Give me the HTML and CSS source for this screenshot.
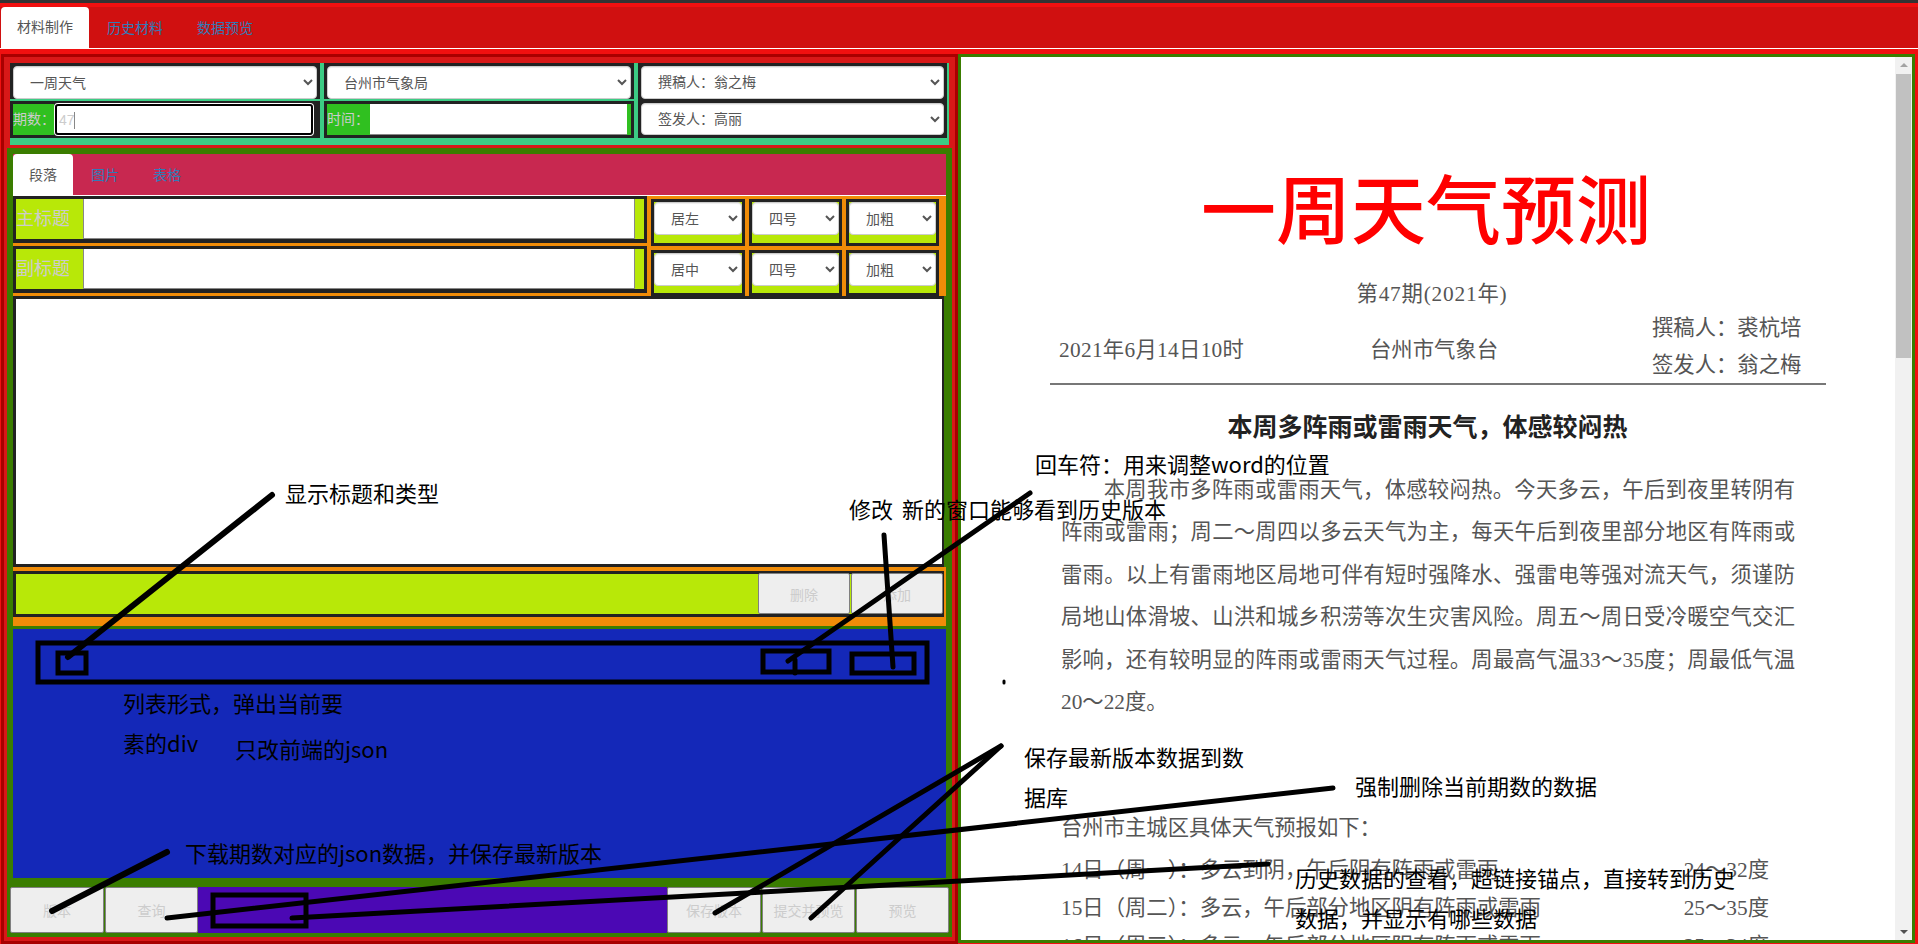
FILE: index.html
```html
<!DOCTYPE html>
<html lang="zh-CN">
<head>
  <meta charset="UTF-8" />
  <title>材料制作</title>
  <link rel="stylesheet" href="styles.css">
</head>
<body>
  <div class="top-strip"></div>

  <ul class="nav-tabs">
    <li class="active">材料制作</li>
    <li>历史材料</li>
    <li>数据预览</li>
  </ul>

  <div class="main">
    <!-- left: the form -->
    <div class="left">
      <div class="head">
        <div class="head-col">
          <div class="select-box">
            <select class="form-select"><option>一周天气</option></select>
          </div>
          <div class="input-group no-tail">
            <span class="input-label">期数：</span>
            <span class="input-wrap">
              <input class="form-input focused" type="text" value="47" />
              <span class="caret"></span>
            </span>
          </div>
        </div>
        <div class="head-col">
          <div class="select-box">
            <select class="form-select"><option>台州市气象局</option></select>
          </div>
          <div class="input-group">
            <span class="input-label">时间：</span>
            <input class="form-input" type="text" />
          </div>
        </div>
        <div class="head-col people">
          <select class="form-select"><option>撰稿人：翁之梅</option></select>
          <select class="form-select"><option>签发人：高丽</option></select>
        </div>
      </div>

      <div class="panel">
        <ul class="sub-tabs">
          <li class="active">段落</li>
          <li>图片</li>
          <li>表格</li>
        </ul>

        <div class="title-rows">
          <div class="title-inputs">
            <div class="title-group">
              <span class="title-label">主标题</span>
              <input class="title-input" type="text" />
            </div>
            <div class="title-group">
              <span class="title-label">副标题</span>
              <input class="title-input" type="text" />
            </div>
          </div>
          <div class="title-opts">
            <div class="opt"><select class="form-select"><option>居左</option></select></div>
            <div class="opt"><select class="form-select"><option>四号</option></select></div>
            <div class="opt"><select class="form-select"><option>加粗</option></select></div>
            <div class="opt"><select class="form-select"><option>居中</option></select></div>
            <div class="opt"><select class="form-select"><option>四号</option></select></div>
            <div class="opt"><select class="form-select"><option>加粗</option></select></div>
          </div>
        </div>

        <div class="text-box"><textarea class="text-area"></textarea></div>

        <div class="action-wrap">
          <div class="action-bar">
            <button class="btn small">删除</button>
            <button class="btn small">添加</button>
          </div>
        </div>

        <div class="list-area"></div>

        <div class="footer">
          <button class="btn wide">版本</button>
          <button class="btn">查询</button>
          <div class="footer-fill"></div>
          <button class="btn wide">保存版本</button>
          <button class="btn">提交并预览</button>
          <button class="btn">预览</button>
        </div>
      </div>
    </div>

    <!-- right: the document preview -->
    <div class="right">
      <div class="doc">
        <h1 class="doc-title">一周天气预测</h1>
        <p class="doc-issue">第47期(2021年)</p>
        <div class="doc-meta">
          <span class="doc-date">2021年6月14日10时</span>
          <span>台州市气象台</span>
          <span class="doc-people">撰稿人：裘杭培<br>签发人：翁之梅</span>
        </div>
        <h2 class="doc-head">本周多阵雨或雷雨天气，体感较闷热</h2>
        <p class="doc-para">本周我市多阵雨或雷雨天气，体感较闷热。今天多云，午后到夜里转阴有阵雨或雷雨；周二～周四以多云天气为主，每天午后到夜里部分地区有阵雨或雷雨。以上有雷雨地区局地可伴有短时强降水、强雷电等强对流天气，须谨防局地山体滑坡、山洪和城乡积涝等次生灾害风险。周五～周日受冷暖空气交汇影响，还有较明显的阵雨或雷雨天气过程。周最高气温33～35度；周最低气温20～22度。</p>
        <div class="doc-list">
          <div class="doc-row">台州市主城区具体天气预报如下：</div>
          <div class="doc-row"><span>14日（周一）：多云到阴，午后阴有阵雨或雷雨</span><span>24～32度</span></div>
          <div class="doc-row"><span>15日（周二）：多云，午后部分地区阴有阵雨或雷雨</span><span>25～35度</span></div>
          <div class="doc-row"><span>16日（周三）：多云，午后部分地区阴有阵雨或雷雨</span><span>25～34度</span></div>
        </div>
      </div>
      <div class="scrollbar">
        <span class="arrow up"></span>
        <span class="thumb"></span>
        <span class="arrow down"></span>
      </div>
    </div>
  </div>

  <!-- hand drawn notes on top of the screenshot -->
  <svg class="marks" width="1918" height="944" viewBox="0 0 1918 944">
    <rect x="38" y="643" width="889" height="39" />
    <rect x="58" y="653" width="28" height="20" />
    <rect x="763" y="651" width="66" height="21" />
    <rect x="852" y="654" width="62" height="19" />
    <rect x="213" y="895" width="93" height="31" />
    <line class="thick" x1="68" y1="657" x2="272" y2="495" />
    <line x1="788" y1="661" x2="1030" y2="493" />
    <line x1="795" y1="660" x2="795" y2="673" />
    <line x1="884" y1="535" x2="893" y2="667" />
    <line class="thick" x1="52" y1="911" x2="167" y2="852" />
    <line x1="167" y1="918" x2="1333" y2="788" />
    <line x1="292" y1="918" x2="1268" y2="864" />
    <line x1="715" y1="913" x2="1001" y2="746" />
    <line x1="811" y1="918" x2="1001" y2="746" />
    <line class="dot" x1="1004" y1="681" x2="1004" y2="683" />
  </svg>
  <div class="note n-title">显示标题和类型</div>
  <div class="note n-enter">回车符：用来调整word的位置</div>
  <div class="note n-edit">修改 新的窗口能够看到历史版本</div>
  <div class="note n-list">列表形式，弹出当前要<br>素的div</div>
  <div class="note n-json">只改前端的json</div>
  <div class="note n-down">下载期数对应的json数据，并保存最新版本</div>
  <div class="note n-save">保存最新版本数据到数<br>据库</div>
  <div class="note n-del">强制删除当前期数的数据</div>
  <div class="note n-hist">历史数据的查看，超链接锚点，直接转到历史<br>数据，并显示有哪些数据</div>
</body>
</html>
```

FILE: styles.css
```css
* {
    box-sizing: border-box;
}

body {
    margin: 0;
    width: 1918px;
    height: 944px;
    overflow: hidden;
    position: relative;
    background-color: #f01010;
    font-family: "Liberation Sans", "Noto Sans CJK SC", sans-serif;
    font-size: 14px;
    color: #555;
}

.top-strip {
    height: 3px;
    background-color: #333;
}

/* tabs */
.nav-tabs {
    display: flex;
    list-style: none;
    margin: 4px 0 0;
    padding: 0 0 0 1px;
    height: 42px;
    background-color: #d01010;
    border-bottom: 1px solid #fff;
}

.nav-tabs li {
    padding: 0 16px;
    margin-right: 2px;
    line-height: 42px;
    color: #337ab7;
}

.nav-tabs li.active {
    height: 41px;
    line-height: 41px;
    color: #555;
    background-color: #fff;
    border-radius: 4px 4px 0 0;
}

.main {
    display: flex;
    align-items: flex-start;
    margin-top: 5px;
    padding-left: 1px;
}

/* left column */
.left {
    width: 957px;
    height: 890px;
    padding: 6px 3px 3px;
    background-color: #d81818;
    border: 3px solid #a80000;
}

.head {
    display: grid;
    grid-template-columns: 310px 310px 309px;
    column-gap: 4px;
    height: 82px;
    margin: 0 3px 3px;
    padding: 0 2px 7px 0;
    background-color: #3ccc84;
}

.form-select {
    display: block;
    width: 100%;
    height: 33px;
    padding: 6px 12px;
    border: 1px solid #ccc;
    border-radius: 4px;
    background-color: #fff;
    box-shadow: inset 0 1px 1px rgba(0, 0, 0, .075);
    font-family: "Liberation Sans", "Noto Sans CJK SC", sans-serif;
    font-size: 14px;
    color: #555;
}

.select-box {
    height: 36px;
    padding: 3px 3px 0;
    background-color: #222;
}

.input-group {
    display: flex;
    height: 37px;
    margin-top: 2px;
    padding: 3px 7px 3px 3px;
    background-color: #30c020;
    box-shadow: inset 0 0 0 3px #222;
}

.input-group.no-tail {
    background-color: #222;
}

.input-label {
    width: 43px;
    flex: none;
    line-height: 31px;
    white-space: nowrap;
    color: #ccc;
    background-color: #30c020;
}

.no-tail .input-label {
    width: 41px;
}

.input-wrap {
    position: relative;
    flex: 1;
    display: flex;
}

.form-input {
    flex: 1;
    min-width: 0;
    padding: 0 4px;
    border: 0;
    border-bottom: 1px solid #888;
    background-color: #fff;
    font-family: "Liberation Sans", sans-serif;
    font-size: 14px;
    color: #ccc;
    outline: 0;
}

.form-input.focused {
    padding: 0 2px;
    border: 2px solid #000;
    border-radius: 3px;
    margin-left: 1px;
    box-shadow: 0 0 0 1px #fff;
}

.caret {
    position: absolute;
    left: 20px;
    top: 8px;
    width: 1px;
    height: 17px;
    background-color: #888;
}

.people {
    display: flex;
    flex-direction: column;
    gap: 4px;
    padding: 3px;
    height: 75px;
    background-color: #222;
}

/* green panel */
.panel {
    width: 945px;
    height: 789px;
    padding: 6px 6px 0;
    background-color: #3a7d00;
}

.sub-tabs {
    display: flex;
    list-style: none;
    margin: 0;
    padding: 0;
    height: 42px;
    background-color: #c82850;
    border-bottom: 1px solid #fff;
}

.sub-tabs li {
    padding: 0 16px;
    margin-right: 2px;
    line-height: 42px;
    color: #337ab7;
}

.sub-tabs li.active {
    width: 60px;
    height: 41px;
    color: #555;
    background-color: #fff;
    border-radius: 4px 4px 0 0;
}

.title-rows {
    display: flex;
    height: 100px;
    background-color: #f08c08;
}

.title-inputs {
    width: 634px;
    flex: none;
}

.title-group {
    display: flex;
    height: 47px;
    padding: 3px 12px 4px 3px;
    background-color: #b8e808;
    box-shadow: inset 0 0 0 3px #222, inset 0 -4px 0 #222;
}

.title-group + .title-group {
    margin-top: 3px;
}

.title-label {
    width: 67px;
    flex: none;
    font-size: 18px;
    line-height: 40px;
    color: #ccc;
}

.title-input {
    flex: 1;
    min-width: 0;
    border: 0;
    border-left: 1px solid #888;
    border-right: 1px solid #888;
    border-bottom: 1px solid #888;
    background-color: #fff;
}

.title-opts {
    display: grid;
    grid-template-columns: 94px 93px 93px;
    grid-template-rows: 47px 46px;
    column-gap: 4px;
    row-gap: 4px;
    padding: 3px 0 0 4px;
}

.opt {
    padding: 3px;
    background-color: #b8e808;
    box-shadow: inset 0 0 0 3px #222;
}

.text-box {
    width: 931px;
    height: 271px;
    padding: 3px 2px 3px 3px;
    background-color: #222;
}

.text-area {
    display: block;
    width: 100%;
    height: 100%;
    border: 0;
    resize: none;
    background-color: #fff;
    outline: 0;
}

.action-wrap {
    height: 59px;
    padding: 4px 2px 9px 0;
    background-color: #f08c08;
}

.action-bar {
    display: flex;
    justify-content: flex-end;
    gap: 1px;
    height: 46px;
    padding: 2px 1px 3px 3px;
    background-color: #b8e808;
    box-shadow: inset 0 0 0 3px #222;
}

.list-area {
    height: 249px;
    margin-top: 3px;
    background-color: #1428b8;
}

.footer {
    display: flex;
    gap: 1px;
    height: 46px;
    margin: 9px -3px 0;
}

.footer-fill {
    flex: 1;
    margin: 0 -1px;
    background-color: #4b08b4;
}

.btn {
    width: 93px;
    flex: none;
    padding: 0;
    border: 1px solid #808080;
    border-radius: 2px;
    background-color: #eee;
    font-family: "Liberation Sans", "Noto Sans CJK SC", sans-serif;
    font-size: 14px;
    color: #ccc;
}

.btn.small {
    width: 92px;
}

.btn.wide {
    width: 94px;
}

/* right column */
.right {
    display: flex;
    width: 957px;
    height: 889px;
    background-color: #fff;
    border: 3px solid #3a7d00;
}

.doc {
    flex: 1;
    overflow: hidden;
    padding: 119px 0 0 89px;
    font-family: "Liberation Serif", "Noto Sans CJK SC", serif;
    font-size: 21.33px;
    color: #555;
}

.doc-title {
    width: 776px;
    margin: 0;
    padding-right: 24px;
    text-align: center;
    font-size: 75px;
    line-height: 74px;
    font-weight: 500;
    color: #f00;
}

.doc-issue {
    width: 776px;
    margin: 29px 0 0;
    padding-right: 12px;
    text-align: center;
    line-height: 30px;
    letter-spacing: .8px;
}

.doc-meta {
    display: grid;
    grid-template-columns: 311px 282px auto;
    align-items: center;
    width: 776px;
    height: 75px;
    margin-top: 1px;
    padding-left: 9px;
    border-bottom: 2px solid #777;
}

.doc-date {
    letter-spacing: .3px;
}

.doc-people {
    line-height: 37px;
}

.doc-head {
    width: 776px;
    margin: 26px 0 0;
    padding-right: 21px;
    text-align: center;
    font-size: 25px;
    line-height: 34px;
    color: #222;
}

.doc-para {
    width: 734px;
    margin: 24px 0 0 11px;
    text-indent: 2em;
    text-align: justify;
    line-height: 42.4px;
}

.doc-list {
    width: 708px;
    margin: 86px 0 0 11px;
}

.doc-row {
    display: flex;
    justify-content: space-between;
    line-height: 38px;
    white-space: nowrap;
}

.doc-row:first-child {
    margin-bottom: 4px;
}

.scrollbar {
    display: flex;
    flex-direction: column;
    align-items: center;
    width: 17px;
    flex: none;
    background-color: #f1f1f1;
}

.arrow {
    width: 0;
    height: 0;
    border-left: 4px solid transparent;
    border-right: 4px solid transparent;
}

.arrow.up {
    margin: 6px 0 7px;
    border-bottom: 4px solid #a3a3a3;
}

.arrow.down {
    margin-top: auto;
    margin-bottom: 6px;
    border-top: 4px solid #505050;
}

.thumb {
    width: 15px;
    height: 284px;
    background-color: #c1c1c1;
}

/* annotations over the page */
.marks {
    position: absolute;
    left: 0;
    top: 0;
}

.marks rect {
    fill: none;
    stroke: #000;
    stroke-width: 5;
}

.marks line {
    stroke: #000;
    stroke-width: 5;
    stroke-linecap: round;
}

.marks line.thick {
    stroke-width: 6;
}

.marks line.dot {
    stroke-width: 3;
}

.note {
    position: absolute;
    font-family: "Noto Sans CJK SC", sans-serif;
    font-size: 22px;
    line-height: 40px;
    color: #000;
    white-space: nowrap;
}

.n-title { left: 285px; top: 472px; }
.n-enter { left: 1035px; top: 443px; }
.n-edit { left: 849px; top: 488px; word-spacing: 4px; }
.n-list { left: 123px; top: 682px; }
.n-json { left: 235px; top: 728px; }
.n-down { left: 185px; top: 832px; }
.n-save { left: 1024px; top: 736px; }
.n-del { left: 1355px; top: 765px; }
.n-hist { left: 1295px; top: 857px; }
```
